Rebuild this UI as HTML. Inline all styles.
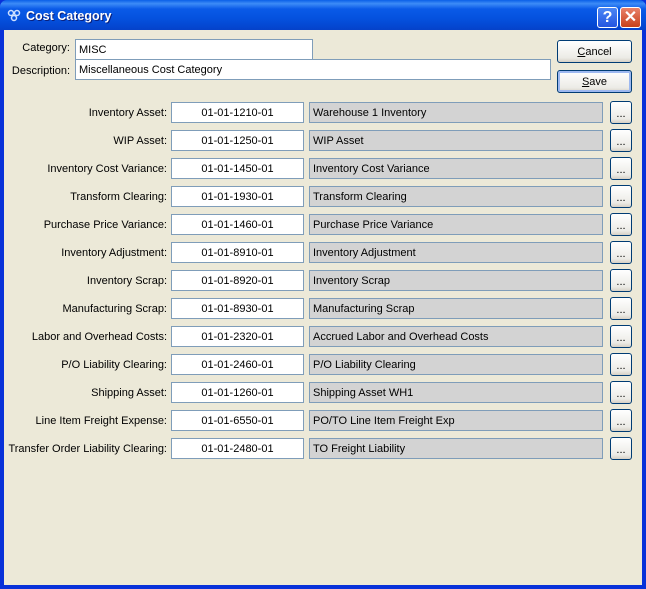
<!DOCTYPE html>
<html><head><style>
*{box-sizing:border-box;margin:0;padding:0}
body{width:646px;height:589px;overflow:hidden;font-family:"Liberation Sans",Arial,sans-serif;font-size:11px;background:#0831d9;position:relative}
.title{position:absolute;left:0;top:0;width:646px;height:30px;border-radius:7px 7px 0 0;background:linear-gradient(#0a5fe8 0%,#3d8cf7 12%,#0a5ae8 30%,#0552df 60%,#0446d0 90%,#0541c8 100%)}
.title span{position:absolute;left:26px;top:9px;color:#fff;font-weight:bold;font-size:12.5px;font-family:"Liberation Sans",sans-serif;text-shadow:1px 1px #0a1f7a}
.body{position:absolute;left:4px;top:30px;width:638px;height:555px;background:#ece9d8}
.tb{position:absolute;top:7px;width:21px;height:21px;border:1px solid #fff;border-radius:3px;color:#fff;font-weight:bold;font-size:16px;text-align:center;line-height:19px}
.lbl{position:absolute;text-align:right;color:#000;white-space:nowrap}
.in{position:absolute;height:21px;background:#fff;border:1px solid #7f9db9;padding:4px 3px 0;white-space:nowrap}
.g{background:#d3d3d3}
.btn{position:absolute;border:1px solid #003c74;border-radius:3px;background:linear-gradient(#fff,#ecebe6 80%,#d6d0c5);text-align:center}
</style></head><body>
<div class="title"><span>Cost Category</span>
<svg style="position:absolute;left:7px;top:9px" width="14" height="13"><circle cx="4" cy="4" r="2.5" fill="none" stroke="#cfe0ff" stroke-width="1.5"/><circle cx="10" cy="4" r="2.5" fill="none" stroke="#cfe0ff" stroke-width="1.5"/><circle cx="7" cy="9" r="2.5" fill="none" stroke="#cfe0ff" stroke-width="1.5"/></svg>
<div class="tb" style="left:597px;background:linear-gradient(#4b86f5,#2455e0)">?</div>
<div class="tb" style="left:620px;background:linear-gradient(#e9826a,#c8401a)">✕</div>
</div>
<div class="body"></div>
<div class="lbl" style="left:0;width:70px;top:42px">Category:</div>
<div class="in" style="left:75px;top:39px;width:238px">MISC</div>
<div class="lbl" style="left:0;width:70px;top:65px">Description:</div>
<div class="in" style="left:75px;top:59px;width:476px">Miscellaneous Cost Category</div>
<div class="btn" style="left:557px;top:40px;width:75px;height:23px;line-height:22px"><u>C</u>ancel</div>
<div class="btn" style="left:557px;top:70px;width:75px;height:23px;line-height:22px;box-shadow:inset 0 0 0 2px #9db8f0"><u>S</u>ave</div>
<div id="rows"></div>
<script>
var r=[["Inventory Asset:","01-01-1210-01","Warehouse 1 Inventory"],["WIP Asset:","01-01-1250-01","WIP Asset"],["Inventory Cost Variance:","01-01-1450-01","Inventory Cost Variance"],["Transform Clearing:","01-01-1930-01","Transform Clearing"],["Purchase Price Variance:","01-01-1460-01","Purchase Price Variance"],["Inventory Adjustment:","01-01-8910-01","Inventory Adjustment"],["Inventory Scrap:","01-01-8920-01","Inventory Scrap"],["Manufacturing Scrap:","01-01-8930-01","Manufacturing Scrap"],["Labor and Overhead Costs:","01-01-2320-01","Accrued Labor and Overhead Costs"],["P/O Liability Clearing:","01-01-2460-01","P/O Liability Clearing"],["Shipping Asset:","01-01-1260-01","Shipping Asset WH1"],["Line Item Freight Expense:","01-01-6550-01","PO/TO Line Item Freight Exp"],["Transfer Order Liability Clearing:","01-01-2480-01","TO Freight Liability"]];
var h="";r.forEach(function(a,i){var y=102+i*28;
h+='<div class="lbl" style="left:0;width:167px;top:'+(y+5)+'px">'+a[0]+'</div>'+
'<div class="in" style="left:171px;top:'+y+'px;width:133px;text-align:center">'+a[1]+'</div>'+
'<div class="in g" style="left:309px;top:'+y+'px;width:294px">'+a[2]+'</div>'+
'<div class="btn" style="left:610px;top:'+(y-1)+'px;width:22px;height:23px;line-height:24px">...</div>';});
document.getElementById("rows").innerHTML=h;
</script>
</body></html>
